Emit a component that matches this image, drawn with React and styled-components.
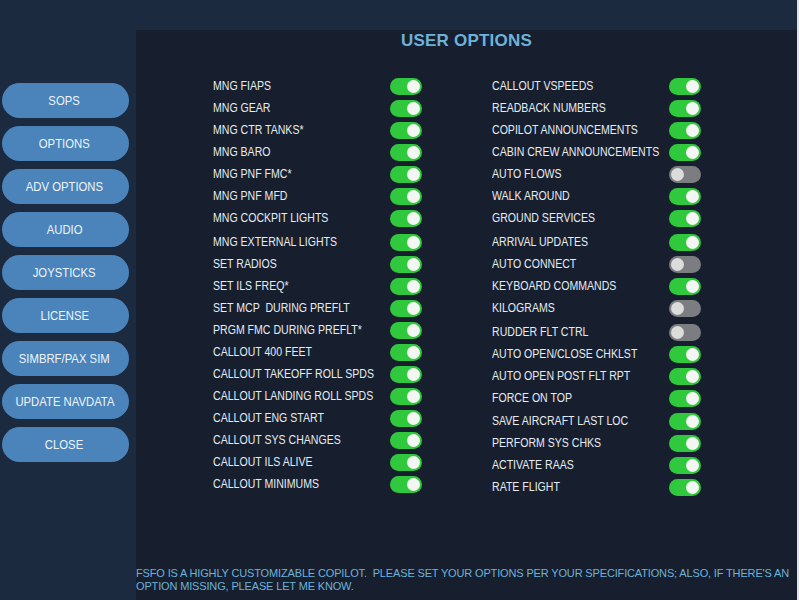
import React from "react";
import styled, { createGlobalStyle } from "styled-components";

const Global = createGlobalStyle`
  html, body { margin: 0; padding: 0; background: #dfe3e8; }
  body { font-family: "Liberation Sans", Arial, sans-serif; }
  * { box-sizing: border-box; }
`;

const Shell = styled.div`
  width: 797px;
  height: 600px;
  background: #1c2a3f;
  display: grid;
  grid-template-columns: 136px 1fr;
  grid-template-rows: 30px 1fr;
  overflow: hidden;
`;

const TopBar = styled.div`
  grid-column: 1 / 3;
`;

const Sidebar = styled.nav`
  display: flex;
  flex-direction: column;
  gap: 8px;
  padding: 53px 0 0 2px;
`;

const NavButton = styled.button`
  width: 127px;
  height: 35px;
  border: none;
  border-radius: 18px;
  background: #4a84bb;
  color: #eef4fa;
  font-family: "Liberation Sans", Arial, sans-serif;
  font-size: 13px;
  padding: 0 2px 0 0;
  display: flex;
  align-items: center;
  justify-content: center;
  white-space: nowrap;
`;

const Narrow = styled.span`
  display: inline-block;
  white-space: pre;
  transform: scaleX(${(p) => p.$scale || 0.88});
  transform-origin: ${(p) => p.$origin || "left"} center;
`;

const Panel = styled.main`
  background: #171f2e;
  display: flex;
  flex-direction: column;
`;

const Title = styled.h1`
  margin: 1px 0 0 0;
  height: 20px;
  line-height: 20px;
  text-align: center;
  font-family: "Liberation Sans", Arial, sans-serif;
  font-weight: bold;
  font-size: 17px;
  letter-spacing: 0.2px;
  color: #6cb2da;
`;

const Columns = styled.div`
  display: grid;
  grid-template-columns: 279px 279px;
  padding-left: 77px;
  margin-top: 24px;
`;

const Column = styled.div`
  display: flex;
  flex-direction: column;
`;

const Row = styled.div`
  height: 22px;
  display: flex;
  align-items: center;
  margin-top: ${(p) => p.$extra || 0}px;
`;

const Label = styled.span`
  width: 177px;
  color: #e6ecf2;
  font-size: 12px;
  white-space: nowrap;
`;

const Track = styled.span`
  position: relative;
  width: 32px;
  height: 17px;
  border-radius: 9px;
  background: ${(p) => (p.$on ? "#30c83c" : "#7b7d80")};
`;

const Knob = styled.span`
  position: absolute;
  top: 2px;
  left: ${(p) => (p.$on ? "17px" : "2px")};
  width: 13px;
  height: 13px;
  border-radius: 50%;
  background: ${(p) => (p.$on ? "#f4f6f4" : "#dcdcdc")};
`;

const Footer = styled.p`
  margin: auto 0 7px 0;
  color: #6cb2da;
  font-size: 11px;
  line-height: 13px;
  letter-spacing: -0.15px;
`;

const nav = [
  "SOPS",
  "OPTIONS",
  "ADV OPTIONS",
  "AUDIO",
  "JOYSTICKS",
  "LICENSE",
  "SIMBRF/PAX SIM",
  "UPDATE NAVDATA",
  "CLOSE",
];

const left = [
  ["MNG FIAPS", true],
  ["MNG GEAR", true],
  ["MNG CTR TANKS*", true],
  ["MNG BARO", true],
  ["MNG PNF FMC*", true],
  ["MNG PNF MFD", true],
  ["MNG COCKPIT LIGHTS", true],
  ["MNG EXTERNAL LIGHTS", true, 2],
  ["SET RADIOS", true],
  ["SET ILS FREQ*", true],
  ["SET MCP  DURING PREFLT", true],
  ["PRGM FMC DURING PREFLT*", true],
  ["CALLOUT 400 FEET", true],
  ["CALLOUT TAKEOFF ROLL SPDS", true],
  ["CALLOUT LANDING ROLL SPDS", true],
  ["CALLOUT ENG START", true],
  ["CALLOUT SYS CHANGES", true],
  ["CALLOUT ILS ALIVE", true],
  ["CALLOUT MINIMUMS", true],
];

const right = [
  ["CALLOUT VSPEEDS", true],
  ["READBACK NUMBERS", true],
  ["COPILOT ANNOUNCEMENTS", true],
  ["CABIN CREW ANNOUNCEMENTS", true],
  ["AUTO FLOWS", false],
  ["WALK AROUND", true],
  ["GROUND SERVICES", true],
  ["ARRIVAL UPDATES", true, 2],
  ["AUTO CONNECT", false],
  ["KEYBOARD COMMANDS", true],
  ["KILOGRAMS", false],
  ["RUDDER FLT CTRL", false, 2],
  ["AUTO OPEN/CLOSE CHKLST", true],
  ["AUTO OPEN POST FLT RPT", true],
  ["FORCE ON TOP", true],
  ["SAVE AIRCRAFT LAST LOC", true, 1],
  ["PERFORM SYS CHKS", true],
  ["ACTIVATE RAAS", true],
  ["RATE FLIGHT", true],
];

function Toggle({ on }) {
  return (
    <Track $on={on}>
      <Knob $on={on} />
    </Track>
  );
}

function OptionColumn({ items }) {
  return (
    <Column>
      {items.map(([label, on, extra]) => (
        <Row key={label} $extra={extra}>
          <Label>
            <Narrow>{label}</Narrow>
          </Label>
          <Toggle on={on} />
        </Row>
      ))}
    </Column>
  );
}

export default function App() {
  return (
    <>
      <Global />
      <Shell>
        <TopBar />
        <Sidebar>
          {nav.map((n) => (
            <NavButton key={n}>
              <Narrow $scale={0.87} $origin="center">
                {n}
              </Narrow>
            </NavButton>
          ))}
        </Sidebar>
        <Panel>
          <Title>USER OPTIONS</Title>
          <Columns>
            <OptionColumn items={left} />
            <OptionColumn items={right} />
          </Columns>
          <Footer>
            FSFO IS A HIGHLY CUSTOMIZABLE COPILOT.&nbsp; PLEASE SET YOUR OPTIONS PER YOUR
            SPECIFICATIONS; ALSO, IF THERE'S AN OPTION MISSING, PLEASE LET ME KNOW.
          </Footer>
        </Panel>
      </Shell>
    </>
  );
}
